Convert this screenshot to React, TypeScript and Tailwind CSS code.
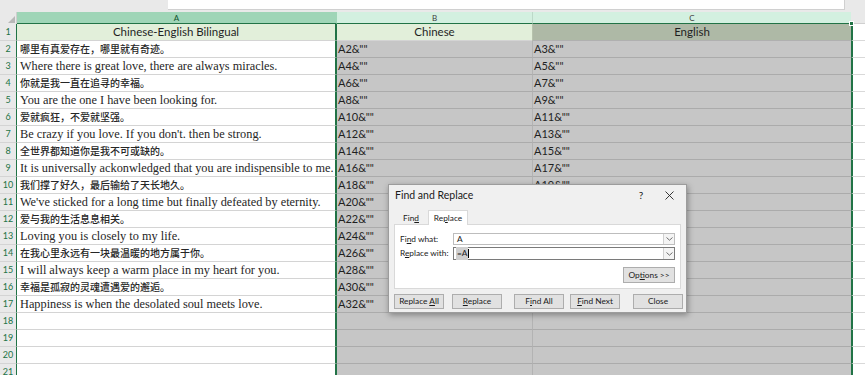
import React from "react"

const serif = "font-['Liberation_Serif','Noto_Sans_CJK_SC',serif]"
const sans = "font-['Lato','Noto_Sans',sans-serif]"

const rows: [string, string, string][] = [
  ["哪里有真爱存在，哪里就有奇迹。", 'A2&""', 'A3&""'],
  ["Where there is great love, there are always miracles.", 'A4&""', 'A5&""'],
  ["你就是我一直在追寻的幸福。", 'A6&""', 'A7&""'],
  ["You are the one I have been looking for.", 'A8&""', 'A9&""'],
  ["爱就疯狂，不爱就坚强。", 'A10&""', 'A11&""'],
  ["Be crazy if you love. If you don't. then be strong.", 'A12&""', 'A13&""'],
  ["全世界都知道你是我不可或缺的。", 'A14&""', 'A15&""'],
  ["It is universally ackonwledged that you are indispensible to me.", 'A16&""', 'A17&""'],
  ["我们撑了好久，最后输给了天长地久。", 'A18&""', 'A19&""'],
  ["We've sticked for a long time but finally defeated by eternity.", 'A20&""', 'A21&""'],
  ["爱与我的生活息息相关。", 'A22&""', 'A23&""'],
  ["Loving you is closely to my life.", 'A24&""', 'A25&""'],
  ["在我心里永远有一块最温暖的地方属于你。", 'A26&""', 'A27&""'],
  ["I will always keep a warm place in my heart for you.", 'A28&""', 'A29&""'],
  ["幸福是孤寂的灵魂遭遇爱的邂逅。", 'A30&""', 'A31&""'],
  ["Happiness is when the desolated soul meets love.", 'A32&""', 'A33&""'],
]

const isCjk = (s: string) => /[\u4e00-\u9fff]/.test(s)

function RowHead({ n }: { n: number }) {
  return (
    <div className="flex h-[17px] w-[17px] shrink-0 items-center justify-center border-b border-r border-b-[#d4d4d4] border-r-[#217346] bg-[#e9e9e9] text-[9px] text-[#217346]">
      {n}
    </div>
  )
}

function Chevron() {
  return (
    <div className="flex h-full w-[11px] items-center justify-center border-l border-[#d0d0d0] bg-[#f4f4f4]">
      <svg width="7" height="4" viewBox="0 0 7 4">
        <path d="M0.5 0.5 L3.5 3.2 L6.5 0.5" fill="none" stroke="#606060" strokeWidth="0.9" />
      </svg>
    </div>
  )
}

function Btn({
  children,
  className = "",
}: {
  children: React.ReactNode
  className?: string
}) {
  return (
    <div
      className={`flex h-[15px] w-[50px] items-center justify-center border border-[#adadad] bg-[#e1e1e1] text-[8.3px] text-[#1a1a1a] ${className}`}
    >
      <span className="whitespace-pre">{children}</span>
    </div>
  )
}

function Dialog() {
  return (
    <div
      className={`absolute left-[388px] top-[184px] flex h-[129px] w-[299px] flex-col border border-[#9c9c9c] bg-[#f0f0f0] shadow-[1px_2px_6px_rgba(0,0,0,0.35)] ${sans}`}
    >
      <div className="flex h-[21px] items-center pl-[6px] text-[10.5px] text-[#1a1a1a]">
        <span>Find and Replace</span>
        <span className="ml-auto w-[30px] text-center text-[10px]">?</span>
        <span className="mr-[4px] flex w-[26px] justify-center">
          <svg width="9" height="9" viewBox="0 0 9 9">
            <path d="M0.5 0.5 L8.5 8.5 M8.5 0.5 L0.5 8.5" stroke="#222" strokeWidth="0.9" />
          </svg>
        </span>
      </div>
      <div className="ml-[5px] mt-[3px] flex h-[15px] items-end text-[8.3px] text-[#1a1a1a]">
        <div className="flex h-[12px] w-[34px] items-center justify-center">
          <span>
            Fin<span className="underline">d</span>
          </span>
        </div>
        <div className="relative -mb-px flex h-[15px] w-[40px] items-center justify-center border border-b-0 border-[#d9d9d9] bg-white">
          <span>
            Re<span className="underline">p</span>lace
          </span>
        </div>
      </div>
      <div className="mx-[5px] flex h-[65px] flex-col border border-[#d9d9d9] bg-white pl-[5px] pr-[5px] text-[8.3px] text-[#1a1a1a]">
        <div className="mt-[8px] flex h-[12px] items-center">
          <span className="w-[53px] whitespace-pre">
            Fi<span className="underline">n</span>d what:
          </span>
          <div className="flex h-[12px] flex-1 items-center border border-[#bdbdbd]">
            <span className="flex-1 pl-[3px]">A</span>
            <Chevron />
          </div>
        </div>
        <div className="mt-[2px] flex h-[13px] items-center">
          <span className="w-[53px] whitespace-pre">
            R<span className="underline">e</span>place with:
          </span>
          <div className="flex h-[13px] flex-1 items-center border border-[#7a7a7a]">
            <span className="flex flex-1 items-center pl-[2px]">
              <span className="bg-[#cfcfcf] px-px">=A</span>
              <span className="h-[9px] w-px bg-black" />
            </span>
            <Chevron />
          </div>
        </div>
        <div className="mt-[7px] flex justify-end">
          <Btn className="h-[16px] w-[52px]">
            Op<span className="underline">t</span>ions &gt;&gt;
          </Btn>
        </div>
      </div>
      <div className="mt-[5px] flex pl-[5px]">
        <Btn className="w-[49px]">
          Replace <span className="underline">A</span>ll
        </Btn>
        <Btn className="ml-[8px]">
          <span className="underline">R</span>eplace
        </Btn>
        <Btn className="ml-[12px]">
          F<span className="underline">i</span>nd All
        </Btn>
        <Btn className="ml-[6px] border-[#0078d7]">
          <span className="underline">F</span>ind Next
        </Btn>
        <Btn className="ml-[13px]">Close</Btn>
      </div>
    </div>
  )
}

export default function App() {
  const empty = [18, 19, 20, 21]
  return (
    <div className={`relative h-[375px] w-[865px] overflow-hidden bg-white ${sans}`}>
      {/* formula bar strip */}
      <div className="flex h-[12px] bg-[#e9e9e9]">
        <div className="ml-[168px] h-[10px] w-[677px] border-b border-r border-[#d0d0d0] bg-white" />
      </div>

      {/* column headers */}
      <div className="flex h-[12px] text-[8px]">
        <div className="relative w-[17px] shrink-0 border-r border-[#cfcfcf] bg-[#e9e9e9]">
          <svg className="absolute bottom-[1px] right-[1px]" width="7" height="7" viewBox="0 0 7 7">
            <path d="M7 0 L7 7 L0 7 Z" fill="#b8b8b8" />
          </svg>
        </div>
        <div className="flex w-[319px] shrink-0 items-center justify-center border-b border-[#217346] bg-[#9fd5b7] text-[#10522d]">
          A
        </div>
        <div className="flex w-[196px] shrink-0 items-center justify-center border-b border-l border-[#217346] border-l-[#9fd5b7] bg-[#d3f0e0] text-[#3d3d3d]">
          B
        </div>
        <div className="flex w-[319px] shrink-0 items-center justify-center border-b border-l border-[#217346] border-l-[#bcd9c8] bg-[#d3f0e0] text-[#3d3d3d]">
          C
        </div>
        <div className="flex-1 border-b border-[#d0d0d0] bg-[#e9e9e9]" />
      </div>

      {/* row 1 */}
      <div className="flex h-[17px] text-[11.5px] text-[#1f1f1f]">
        <RowHead n={1} />
        <div className="flex w-[319px] shrink-0 items-center justify-center border-b border-r border-b-[#d4d4d4] border-r-[#217346] bg-[#e2efda]">
          Chinese-English Bilingual
        </div>
        <div className="flex w-[196px] shrink-0 items-center justify-center border-b border-l border-b-[#d4d4d4] border-l-[#217346] bg-[#e2efda]">
          Chinese
        </div>
        <div className="flex w-[319px] shrink-0 items-center justify-center border-b border-l border-b-[#b0b0b0] border-l-[#b7c3ad] bg-[#aeb9a6]">
          English
        </div>
        <div className="relative flex-1 border-b border-l-2 border-b-[#d9d9d9] border-l-[#217346] bg-white">
          <div className="absolute -left-[4px] -top-[3px] h-[5px] w-[5px] border border-white bg-[#217346]" />
        </div>
      </div>

      {rows.map(([a, b, c], i) => (
        <div key={i} className="flex h-[17px]">
          <RowHead n={i + 2} />
          <div
            className={`flex w-[319px] shrink-0 items-center overflow-visible whitespace-nowrap border-b border-r border-b-[#d4d4d4] border-r-[#217346] bg-white pl-[3px] text-[#262626] ${serif} ${
              isCjk(a) ? "text-[10px] font-medium" : "text-[12.3px]"
            }`}
          >
            {a}
          </div>
          <div className="flex w-[196px] shrink-0 items-center border-b border-l border-b-[#ababab] border-l-[#217346] bg-[#c6c6c6] pl-[1px] text-[11px] text-[#1f1f1f]">
            {b}
          </div>
          <div className="flex w-[319px] shrink-0 items-center border-b border-l border-b-[#ababab] border-l-[#b3b3b3] bg-[#c6c6c6] pl-[1px] text-[11px] text-[#1f1f1f]">
            {c}
          </div>
          <div className="flex-1 border-b border-l-2 border-b-[#d9d9d9] border-l-[#217346] bg-white" />
        </div>
      ))}

      {empty.map((n) => (
        <div key={n} className="flex h-[17px]">
          <RowHead n={n} />
          <div className="w-[319px] shrink-0 border-b border-r border-b-[#d4d4d4] border-r-[#217346] bg-white" />
          <div className="w-[196px] shrink-0 border-b border-l border-b-[#ababab] border-l-[#217346] bg-[#c6c6c6]" />
          <div className="w-[319px] shrink-0 border-b border-l border-b-[#ababab] border-l-[#b3b3b3] bg-[#c6c6c6]" />
          <div className="flex-1 border-b border-l-2 border-b-[#d9d9d9] border-l-[#217346] bg-white" />
        </div>
      ))}

      <Dialog />
    </div>
  )
}
